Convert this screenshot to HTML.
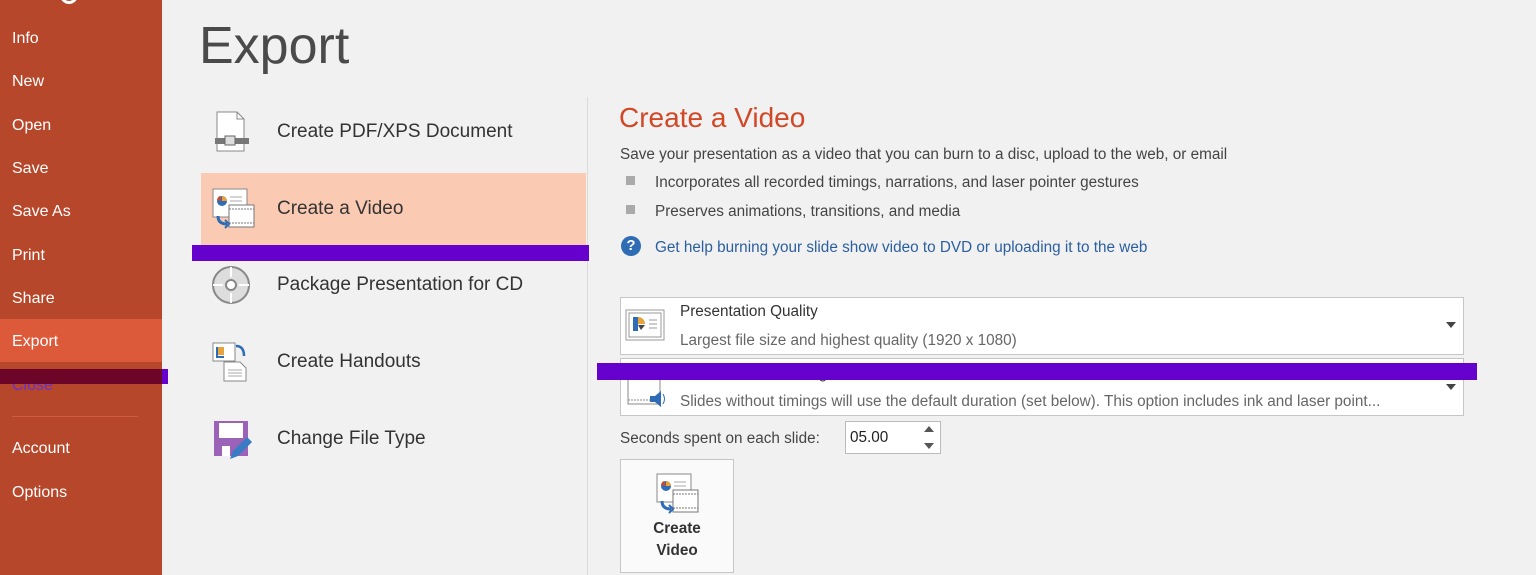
<!DOCTYPE html>
<html><head><meta charset="utf-8"><style>
*{margin:0;padding:0;box-sizing:border-box}
body{width:1536px;height:575px;overflow:hidden;background:#f1f1f1;font-family:"Liberation Sans",sans-serif;position:relative}
.abs{position:absolute}
.side{left:0;top:0;width:162px;height:575px;background:#b7472a}
.nav{position:absolute;left:12px;color:#fff;font-size:16px;line-height:20px}
.item{position:absolute;left:277px;font-size:19px;color:#333;line-height:24px}
.t{position:absolute;white-space:nowrap}
</style></head><body>
<div class="abs side"></div>
<div class="abs" style="left:60px;top:-14px;width:18px;height:18px;border:3px solid #fff;border-radius:50%"></div>
<div class="abs" style="left:0;top:319px;width:162px;height:43px;background:#dc5a3a"></div>
<div class="nav" style="top:29px">Info</div>
<div class="nav" style="top:72px">New</div>
<div class="nav" style="top:116px">Open</div>
<div class="nav" style="top:159px">Save</div>
<div class="nav" style="top:202px">Save As</div>
<div class="nav" style="top:246px">Print</div>
<div class="nav" style="top:289px">Share</div>
<div class="nav" style="top:332px">Export</div>
<div class="nav" style="top:376px;color:#6a2fd0">Close</div>
<div class="abs" style="left:0;top:369px;width:162px;height:15px;background:#650028;opacity:.92"></div>
<div class="abs" style="left:162px;top:369px;width:6px;height:15px;background:#6600cc"></div>
<div class="abs" style="left:12px;top:416px;width:126px;height:1px;background:#d05a3e"></div>
<div class="nav" style="top:439px">Account</div>
<div class="nav" style="top:483px">Options</div>

<div class="t" style="left:199px;top:16px;font-size:52px;color:#4a4a4a;letter-spacing:0px">Export</div>
<div class="abs" style="left:587px;top:97px;width:1px;height:478px;background:#dadada"></div>

<div class="abs" style="left:201px;top:173px;width:385px;height:72px;background:#fbcab2"></div>
<div class="abs" style="left:192px;top:245px;width:397px;height:16px;background:#6600cc"></div>

<svg class="abs" style="left:212px;top:110px" width="40" height="44"><path d="M5 2h20l7 7v32H5z" fill="#fff" stroke="#888"/><path d="M25 2v7h7" fill="none" stroke="#888"/><rect x="3" y="28" width="34" height="6" fill="#777"/><rect x="13" y="26" width="10" height="9" fill="#ddd" stroke="#666"/></svg>
<svg class="abs" style="left:212px;top:188px" width="44" height="44"><rect x="1" y="1" width="34" height="28" fill="#fff" stroke="#888"/><circle cx="10" cy="13" r="5" fill="#2e6db5"/><path d="M10 13V8a5 5 0 0 1 5 5z" fill="#e8a33c"/><path d="M10 13l-5-1a5 5 0 0 1 3-4z" fill="#d24726"/><path d="M18 9h12M18 13h12M18 17h10" stroke="#aaa"/><rect x="17" y="17" width="25" height="22" fill="#fff" stroke="#777"/><path d="M17 21h25M17 35h25" stroke="#777" stroke-dasharray="2 1"/><path d="M6 28q0 8 9 8" fill="none" stroke="#2e6db5" stroke-width="3"/><path d="M13 32l4 4-4 4" fill="none" stroke="#2e6db5" stroke-width="2"/></svg>
<svg class="abs" style="left:211px;top:265px" width="40" height="40"><circle cx="20" cy="20" r="18" fill="#ddd" stroke="#888" stroke-width="2"/><circle cx="20" cy="20" r="5" fill="#fff" stroke="#888" stroke-width="2"/><path d="M20 2v10M20 28v10M2 20h10M28 20h10" stroke="#fff" stroke-width="2"/></svg>
<svg class="abs" style="left:212px;top:342px" width="42" height="40"><rect x="1" y="1" width="22" height="18" fill="#fff" stroke="#888"/><path d="M5 5h7v8H5z" fill="#e8a33c"/><path d="M5 5v10h7" fill="none" stroke="#2e6db5" stroke-width="2"/><path d="M12 20h16l6 6v13H12z" fill="#fff" stroke="#888"/><path d="M16 28h14M16 31h14M16 34h14" stroke="#aaa"/><path d="M24 4q8 0 8 10" fill="none" stroke="#2e6db5" stroke-width="2.5"/></svg>
<svg class="abs" style="left:212px;top:420px" width="42" height="40"><rect x="2" y="1" width="34" height="35" fill="#9b63b8"/><rect x="7" y="3" width="24" height="15" fill="#fff"/><rect x="10" y="26" width="8" height="10" fill="#fff"/><path d="M18 39l3-8 14-14 5 5-14 14z" fill="#3a7cc4"/></svg>

<div class="item" style="top:120px">Create PDF/XPS Document</div>
<div class="item" style="top:197px">Create a Video</div>
<div class="item" style="top:273px">Package Presentation for CD</div>
<div class="item" style="top:350px">Create Handouts</div>
<div class="item" style="top:427px">Change File Type</div>

<div class="t" style="left:619px;top:102px;font-size:28px;color:#d24726">Create a Video</div>
<div class="t" style="left:620px;top:146px;font-size:15.3px;color:#444">Save your presentation as a video that you can burn to a disc, upload to the web, or email</div>
<div class="abs" style="left:626px;top:176px;width:9px;height:9px;background:#aaa"></div>
<div class="abs" style="left:626px;top:205px;width:9px;height:9px;background:#aaa"></div>
<div class="t" style="left:655px;top:174px;font-size:15.3px;color:#444">Incorporates all recorded timings, narrations, and laser pointer gestures</div>
<div class="t" style="left:655px;top:203px;font-size:15.3px;color:#444">Preserves animations, transitions, and media</div>
<div class="abs" style="left:621px;top:236px;width:20px;height:20px;border-radius:50%;background:#2e6db5;color:#fff;font-size:15px;font-weight:bold;text-align:center;line-height:20px">?</div>
<div class="t" style="left:655px;top:239px;font-size:15.3px;color:#2b5fa0">Get help burning your slide show video to DVD or uploading it to the web</div>

<div class="abs" style="left:620px;top:297px;width:844px;height:58px;background:#fff;border:1px solid #c6c6c6"></div>
<svg class="abs" style="left:625px;top:309px" width="42" height="34"><rect x="1" y="1" width="38" height="30" fill="#fff" stroke="#999"/><rect x="4" y="4" width="32" height="24" fill="none" stroke="#999"/><path d="M8 8h5v14H8z" fill="#2e6db5"/><path d="M13 8a7 7 0 0 1 7 7h-7z" fill="#e8a33c"/><path d="M13 16h7l-4 5z" fill="#444"/><path d="M24 11h8M24 15h8M24 19h8" stroke="#999"/></svg>
<div class="t" style="left:680px;top:303px;font-size:15.3px;color:#333">Presentation Quality</div>
<div class="t" style="left:680px;top:332px;font-size:15.3px;color:#666">Largest file size and highest quality (1920 x 1080)</div>
<div class="abs" style="left:1446px;top:322px;border-left:5px solid transparent;border-right:5px solid transparent;border-top:6px solid #444"></div>

<div class="abs" style="left:620px;top:358px;width:844px;height:58px;background:#fff;border:1px solid #c6c6c6"></div>
<svg class="abs" style="left:626px;top:368px" width="42" height="42"><rect x="2" y="4" width="32" height="32" fill="#fff" stroke="#888"/><path d="M2 8h32M2 32h32" stroke="#888" stroke-dasharray="2 1"/><path d="M24 28h5l6-5v16l-6-5h-5z" fill="#2e6db5"/><path d="M37 26q3 5 0 10" fill="none" stroke="#2e6db5"/></svg>
<div class="t" style="left:680px;top:365px;font-size:15.3px;color:#333">Use Recorded Timings and Narrations</div>
<div class="t" style="left:680px;top:393px;font-size:15.3px;color:#666">Slides without timings will use the default duration (set below). This option includes ink and laser point...</div>
<div class="abs" style="left:1446px;top:384px;border-left:5px solid transparent;border-right:5px solid transparent;border-top:6px solid #444"></div>
<div class="abs" style="left:597px;top:363px;width:880px;height:17px;background:#6600cc"></div>

<div class="t" style="left:620px;top:430px;font-size:15.3px;color:#444">Seconds spent on each slide:</div>
<div class="abs" style="left:845px;top:421px;width:96px;height:33px;background:#fff;border:1px solid #bbb"></div>
<div class="t" style="left:850px;top:429px;font-size:15.3px;color:#222">05.00</div>
<div class="abs" style="left:924px;top:426px;border-left:5px solid transparent;border-right:5px solid transparent;border-bottom:6px solid #555"></div>
<div class="abs" style="left:924px;top:443px;border-left:5px solid transparent;border-right:5px solid transparent;border-top:6px solid #555"></div>

<div class="abs" style="left:620px;top:459px;width:114px;height:114px;background:#fafafa;border:1px solid #c6c6c6"></div>
<svg class="abs" style="left:656px;top:473px" width="44" height="44"><rect x="1" y="1" width="34" height="28" fill="#fff" stroke="#888"/><circle cx="10" cy="13" r="5" fill="#2e6db5"/><path d="M10 13V8a5 5 0 0 1 5 5z" fill="#e8a33c"/><path d="M10 13l-5-1a5 5 0 0 1 3-4z" fill="#d24726"/><path d="M18 9h12M18 13h12M18 17h10" stroke="#aaa"/><rect x="17" y="17" width="25" height="22" fill="#fff" stroke="#777"/><path d="M17 21h25M17 35h25" stroke="#777" stroke-dasharray="2 1"/><path d="M6 28q0 8 9 8" fill="none" stroke="#2e6db5" stroke-width="3"/><path d="M13 32l4 4-4 4" fill="none" stroke="#2e6db5" stroke-width="2"/></svg>
<div class="abs" style="left:620px;top:518px;width:114px;text-align:center;font-size:15.3px;color:#333;line-height:22px;font-weight:bold">Create<br>Video</div>
</body></html>
